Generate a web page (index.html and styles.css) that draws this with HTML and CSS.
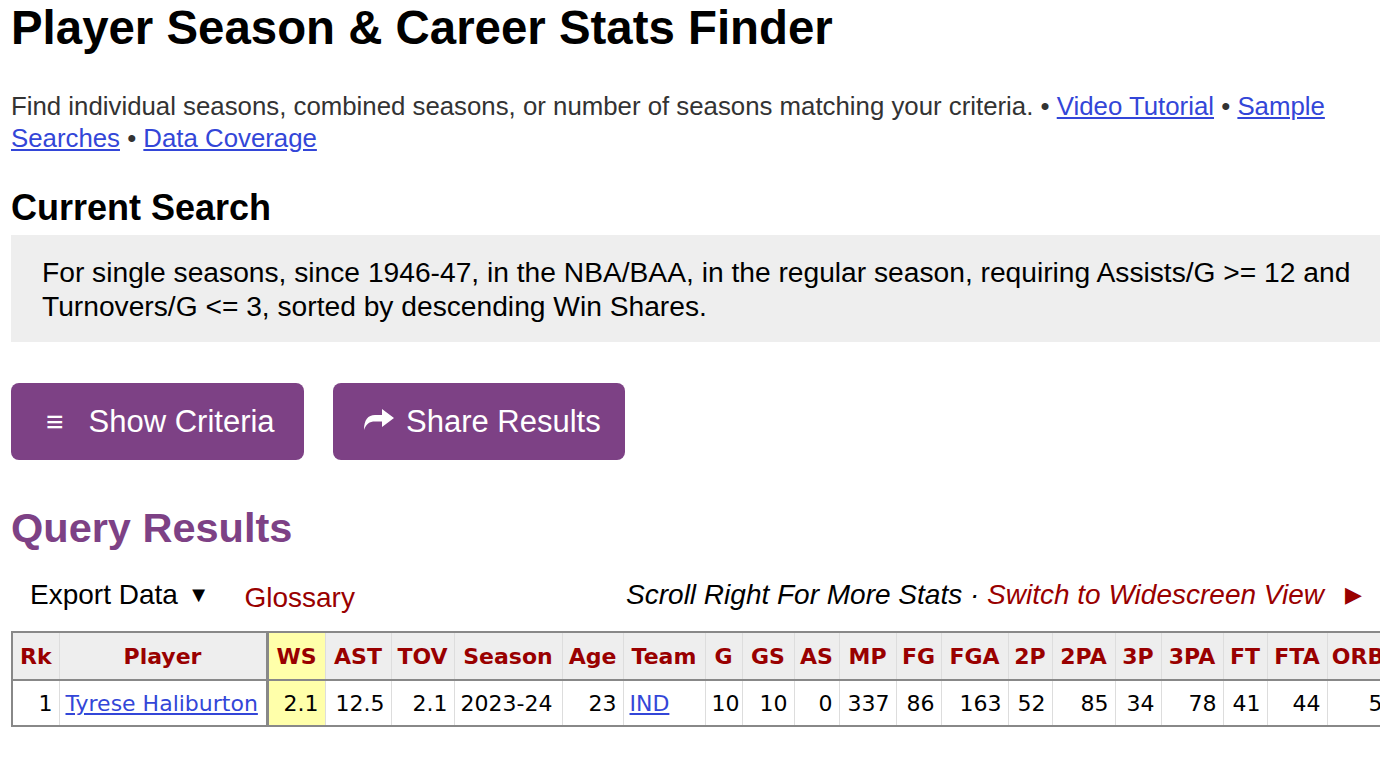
FILE: index.html
```html
<!DOCTYPE html>
<html lang="en">
<head>
  <meta charset="UTF-8" />
  <title>Player Season &amp; Career Stats Finder</title>
  <link rel="stylesheet" href="styles.css">
</head>
<body>

  <!-- page header -->
  <h1 class="page-title">Player Season &amp; Career Stats Finder</h1>
  <p class="intro">
    Find individual seasons, combined seasons, or number of seasons matching your criteria. &bull;
    <a href="#">Video Tutorial</a> &bull; <a href="#">Sample Searches</a> &bull; <a href="#">Data Coverage</a>
  </p>

  <!-- current search summary -->
  <h2 class="section-title">Current Search</h2>
  <div class="search-box">
    For single seasons, since 1946-47, in the NBA/BAA, in the regular season, requiring Assists/G &gt;= 12 and
    Turnovers/G &lt;= 3, sorted by descending Win Shares.
  </div>

  <div class="actions">
    <button class="btn criteria"><span class="menu">&#8801;</span> Show Criteria</button>
    <button class="btn share">
      <svg viewBox="0 0 32 24" width="32" height="24">
        <path d="M19 1 L31 10 L19 19 V13.5 H12 C6.5 13.5 3 16 1 22 C1 12 5 7 12 7 H19 Z" fill="#fff"/>
      </svg>
      Share Results
    </button>
  </div>

  <!-- results -->
  <h2 class="results-title">Query Results</h2>
  <div class="table-tools">
    <div class="tools-left">
      <span class="export">Export Data <span class="caret">&#9660;</span></span>
      <a class="glossary" href="#">Glossary</a>
    </div>
    <div class="tools-right">
      <em>Scroll Right For More Stats &middot; <a href="#">Switch to Widescreen View</a></em>
      <span class="arrow">&#9654;</span>
    </div>
  </div>

  <table class="stats">
    <colgroup>
      <col><col><col><col><col><col><col><col><col><col><col><col><col><col>
      <col><col><col><col><col><col><col><col><col><col><col><col><col>
    </colgroup>
    <thead>
      <tr>
        <th>Rk</th><th>Player</th><th class="sorted">WS</th>
        <th>AST</th><th>TOV</th><th>Season</th><th>Age</th><th>Team</th>
        <th>G</th><th>GS</th><th>AS</th><th>MP</th><th>FG</th><th>FGA</th>
        <th>2P</th><th>2PA</th><th>3P</th><th>3PA</th><th>FT</th><th>FTA</th>
        <th>ORB</th><th>DRB</th><th>TRB</th><th>STL</th><th>BLK</th><th>PF</th><th>PTS</th>
      </tr>
    </thead>
    <tbody>
      <tr>
        <td>1</td><td class="left"><a href="#">Tyrese Haliburton</a></td><td class="sorted">2.1</td>
        <td>12.5</td><td>2.1</td><td class="left">2023-24</td><td>23</td><td class="left"><a href="#">IND</a></td>
        <td>10</td><td>10</td><td>0</td><td>337</td><td>86</td><td>163</td>
        <td>52</td><td>85</td><td>34</td><td>78</td><td>41</td><td>44</td>
        <td>5</td><td>36</td><td>41</td><td>13</td><td>7</td><td>14</td><td>247</td>
      </tr>
    </tbody>
  </table>

</body>
</html>
```

FILE: styles.css
```css
/* page */
html, body { overflow-x: hidden; }
body {
  margin: 0;
  padding: 0 11px;
  background: #fff;
  color: #000;
  font-family: "Liberation Sans", Arial, sans-serif;
}
a { color: #3346d8; }

.page-title {
  margin: 0; padding-top: 1px;
  font-size: 47.4px; line-height: 54px;
}
.intro {
  margin: 35px 0 0;
  font-size: 25.8px; line-height: 32px;
  color: #333;
}
.section-title {
  margin: 34px 0 0;
  font-size: 36px; line-height: 40px;
}

/* current search box */
.search-box {
  width: 1340px;
  margin-top: 7px;
  padding: 20px 31px 19px;
  background: #eee;
  font-size: 28.2px; line-height: 34px;
}

/* buttons */
.actions { display: flex; gap: 29px; margin-top: 41px; }
.btn {
  display: flex; align-items: center;
  height: 77px;
  background: #7d4185; color: #fff;
  border: none; border-radius: 8px;
  font-family: inherit; font-size: 31px;
}
.btn.criteria { width: 293px; padding: 0 0 0 35px; }
.btn.criteria .menu { font-size: 30px; margin-right: 25px; }
.btn.share { width: 292px; padding: 0 0 0 30px; gap: 11px; }
.btn.share svg { margin-top: -4px; }

/* results */
.results-title {
  margin: 46px 0 0;
  font-size: 41.5px; line-height: 44px;
  color: #7d4185;
}
.table-tools {
  display: flex; justify-content: space-between; align-items: center;
  width: 1351px;
  margin-top: 22px; height: 46px;
  font-size: 28px;
}
.tools-left { display: flex; align-items: center; gap: 35px; padding-left: 19px; }
.caret { font-size: 22px; margin-left: 2px; vertical-align: 2px; }
.glossary { color: #990000; text-decoration: none; position: relative; top: 3px; }
.tools-right { display: flex; align-items: center; gap: 21px; }
.tools-right a { color: #990000; text-decoration: none; }
.arrow { color: #990000; font-size: 22px; }

/* stats table */
.stats {
  margin-top: 13px;
  table-layout: fixed;
  width: 1719px;
  border-collapse: collapse;
  border: 2px solid #888;
  font-family: "DejaVu Sans", Verdana, sans-serif;
  font-size: 22px;
  white-space: nowrap;
}
.stats col:nth-child(1) { width: 47px; }
.stats col:nth-child(2) { width: 208px; }
.stats col:nth-child(3) { width: 58px; }
.stats col:nth-child(4) { width: 66px; }
.stats col:nth-child(5) { width: 63px; }
.stats col:nth-child(6) { width: 108px; }
.stats col:nth-child(7) { width: 61px; }
.stats col:nth-child(8) { width: 82px; }
.stats col:nth-child(9) { width: 37px; }
.stats col:nth-child(10) { width: 52px; }
.stats col:nth-child(11) { width: 45px; }
.stats col:nth-child(12) { width: 57px; }
.stats col:nth-child(13) { width: 45px; }
.stats col:nth-child(14) { width: 67px; }
.stats col:nth-child(15) { width: 44px; }
.stats col:nth-child(16) { width: 63px; }
.stats col:nth-child(17) { width: 46px; }
.stats col:nth-child(18) { width: 62px; }
.stats col:nth-child(19) { width: 44px; }
.stats col:nth-child(20) { width: 60px; }
.stats col:nth-child(n+21) { width: 62px; }
.stats col:nth-child(26) { width: 44px; }

.stats th {
  height: 46px;
  padding: 0 4px;
  background: #eee;
  color: #990000;
  border: 1px solid #ddd;
  border-bottom: 2px solid #888;
  border-top: 2px solid #888;
  overflow: hidden;
}
.stats td {
  height: 44px;
  padding: 0 6px;
  text-align: right;
  border: 1px solid #ddd;
  border-bottom: 2px solid #888;
}
.stats td.left { text-align: left; }
.stats .sorted {
  background: #ffffaa;
  border-left: 3px solid #888;
}
```
